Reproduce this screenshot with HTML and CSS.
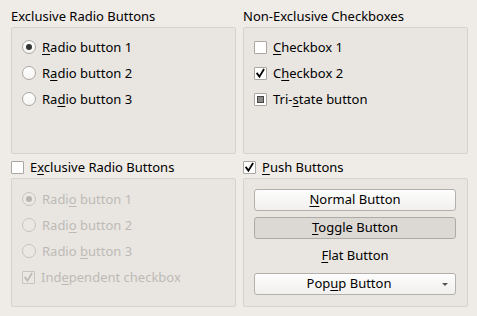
FILE: index.html
```html
<!DOCTYPE html>
<html lang="en">
<head>
    <meta charset="UTF-8">
    <title>Group Boxes</title>
    <link rel="stylesheet" href="styles.css">
</head>
<body>
    <div class="window">
        <section class="group">
            <div class="group-title">Exclusive Radio Buttons</div>
            <div class="frame frame-top">
                <div class="option"><span class="radio checked"></span><span><u>R</u>adio button 1</span></div>
                <div class="option"><span class="radio"></span><span>R<u>a</u>dio button 2</span></div>
                <div class="option"><span class="radio"></span><span>Ra<u>d</u>io button 3</span></div>
            </div>
        </section>

        <section class="group">
            <div class="group-title">Non-Exclusive Checkboxes</div>
            <div class="frame frame-top">
                <div class="option"><span class="check"></span><span><u>C</u>heckbox 1</span></div>
                <div class="option">
                    <span class="check">
                        <svg width="11" height="11" viewBox="0 0 11 11"><path d="M2.2 5.6 L4.4 8.6 L8.6 1.8" fill="none" stroke="#000" stroke-width="1.8" stroke-linecap="square" stroke-linejoin="miter"/></svg>
                    </span>
                    <span>C<u>h</u>eckbox 2</span>
                </div>
                <div class="option"><span class="check"><span class="tri"></span></span><span>Tri-<u>s</u>tate button</span></div>
            </div>
        </section>

        <section class="group">
            <div class="group-title option">
                <span class="check"></span><span>E<u>x</u>clusive Radio Buttons</span>
            </div>
            <div class="frame frame-bottom disabled">
                <div class="option"><span class="radio checked"></span><span>Radi<u>o</u> button 1</span></div>
                <div class="option"><span class="radio"></span><span>Radi<u>o</u> button 2</span></div>
                <div class="option"><span class="radio"></span><span>Radio <u>b</u>utton 3</span></div>
                <div class="option">
                    <span class="check">
                        <svg width="11" height="11" viewBox="0 0 11 11"><path d="M2.2 5.6 L4.4 8.6 L8.6 1.8" fill="none" stroke="#bdbab6" stroke-width="1.8" stroke-linecap="square"/></svg>
                    </span>
                    <span>Ind<u>e</u>pendent checkbox</span>
                </div>
            </div>
        </section>

        <section class="group">
            <div class="group-title option">
                <span class="check">
                    <svg width="11" height="11" viewBox="0 0 11 11"><path d="M2.2 5.6 L4.4 8.6 L8.6 1.8" fill="none" stroke="#000" stroke-width="1.8" stroke-linecap="square"/></svg>
                </span>
                <span><u>P</u>ush Buttons</span>
            </div>
            <div class="frame frame-bottom buttons">
                <div class="button"><u>N</u>ormal Button</div>
                <div class="button pressed"><u>T</u>oggle Button</div>
                <div class="button flat"><u>F</u>lat Button</div>
                <div class="button popup">Pop<u>u</u>p Button<span class="arrow"></span></div>
            </div>
        </section>
    </div>
</body>
</html>
```

FILE: styles.css
```css
body {
    margin: 0;
    background-color: #efebe7;
    font-family: "Noto Sans", "Open Sans", sans-serif;
    font-size: 13px;
    color: #000;
}

u {
    text-decoration-thickness: 1px;
    text-underline-offset: 2px;
}

.window {
    display: grid;
    grid-template-columns: 225px 225px;
    column-gap: 7px;
    row-gap: 5px;
    padding: 8px 0 0 11px;
}

.group {
    display: flex;
    flex-direction: column;
}

.group-title {
    height: 17px;
    line-height: 17px;
    margin-bottom: 2px;
}

.frame {
    box-sizing: border-box;
    border: 1px solid #d6d2ce;
    border-radius: 2px;
    background-color: #e9e6e2;
    padding: 6px 10px 0 10px;
    display: flex;
    flex-direction: column;
}

.frame-top {
    height: 127px;
}

.frame-bottom {
    height: 129px;
    padding-top: 7px;
}

.option {
    display: flex;
    align-items: center;
    gap: 6px;
    height: 26px;
}

.group-title.option {
    height: 17px;
}

.radio {
    box-sizing: border-box;
    width: 14px;
    height: 14px;
    border: 1px solid #aaa6a2;
    border-radius: 50%;
    background: linear-gradient(#ffffff, #f6f5f4);
    display: flex;
    align-items: center;
    justify-content: center;
    flex: none;
}

.radio.checked::after {
    content: "";
    width: 6px;
    height: 6px;
    border-radius: 50%;
    background-color: #333;
}

.check {
    box-sizing: border-box;
    width: 13px;
    height: 13px;
    border: 1px solid #aaa6a2;
    border-radius: 1px;
    background-color: #fff;
    display: flex;
    align-items: center;
    justify-content: center;
    flex: none;
}

.tri {
    box-sizing: border-box;
    width: 7px;
    height: 7px;
    border: 1px solid #4a4846;
    background-color: #8c8986;
}

.disabled {
    color: #bdbab6;
}

.disabled .radio {
    border-color: #c7c3bf;
    background: #ebe8e4;
}

.disabled .radio.checked::after {
    background-color: #b8b5b1;
}

.disabled .check {
    border-color: #c7c3bf;
    background-color: #ebe8e4;
}

.buttons {
    padding-top: 10px;
    gap: 6px;
}

.button {
    box-sizing: border-box;
    width: 202px;
    height: 22px;
    line-height: 19px;
    text-align: center;
    border: 1px solid #b4b1ad;
    border-radius: 3px;
    background: linear-gradient(#fdfdfd, #f2f0ee);
    position: relative;
}

.button.pressed {
    background: #dcd8d4;
    border-color: #aeaaa6;
}

.button.flat {
    border-color: transparent;
    background: none;
}

.button.popup {
    padding-right: 12px;
}

.arrow {
    position: absolute;
    right: 7px;
    top: 9px;
    width: 0;
    height: 0;
    border-left: 3.5px solid transparent;
    border-right: 3.5px solid transparent;
    border-top: 3.5px solid #555;
}
```
